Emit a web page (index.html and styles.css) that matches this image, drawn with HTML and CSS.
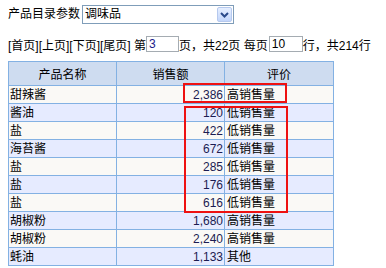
FILE: index.html
```html
<!DOCTYPE html>
<html>
<head>
<meta charset="utf-8">
<link rel="stylesheet" href="styles.css">
</head>
<body>
<div class="row-param">
  <span class="label">产品目录参数</span>
  <div class="select">
    <span class="select-text">调味品</span>
    <span class="select-btn">
      <svg width="9" height="6" viewBox="0 0 9 6"><path d="M1 1 L4.5 4.5 L8 1" fill="none" stroke="#2a4a8a" stroke-width="2"/></svg>
    </span>
  </div>
</div>
<div class="pager">
  <span>[首页][上页][下页][尾页] 第</span>
  <span class="input input-page">3</span>
  <span>页，共22页 每页</span>
  <span class="input input-rows">10</span>
  <span>行，共214行</span>
</div>
<div class="table-wrap">
  <table class="grid">
    <colgroup><col class="c1"><col class="c2"><col class="c3"></colgroup>
    <thead>
      <tr><th>产品名称</th><th>销售额</th><th>评价</th></tr>
    </thead>
    <tbody>
      <tr class="odd"><td>甜辣酱</td><td class="num">2,386</td><td>高销售量</td></tr>
      <tr class="even"><td>酱油</td><td class="num">120</td><td>低销售量</td></tr>
      <tr class="odd"><td>盐</td><td class="num">422</td><td>低销售量</td></tr>
      <tr class="even"><td>海苔酱</td><td class="num">672</td><td>低销售量</td></tr>
      <tr class="odd"><td>盐</td><td class="num">285</td><td>低销售量</td></tr>
      <tr class="even"><td>盐</td><td class="num">176</td><td>低销售量</td></tr>
      <tr class="odd"><td>盐</td><td class="num">616</td><td>低销售量</td></tr>
      <tr class="even"><td>胡椒粉</td><td class="num">1,680</td><td>高销售量</td></tr>
      <tr class="odd"><td>胡椒粉</td><td class="num">2,240</td><td>高销售量</td></tr>
      <tr class="even"><td>蚝油</td><td class="num">1,133</td><td>其他</td></tr>
    </tbody>
  </table>
  <div class="mark mark-high"></div>
  <div class="mark mark-low"></div>
</div>
</body>
</html>
```
FILE: styles.css
```css
html, body {
  margin: 0;
  padding: 0;
  background: #ffffff;
}
body {
  padding: 5px 8px 0 8px;
  font-family: "Liberation Sans", "Noto Sans CJK SC", sans-serif;
  font-size: 12px;
  color: #000;
}
.row-param {
  display: flex;
  align-items: center;
  height: 19px;
}
.label {
  line-height: 19px;
  margin-right: 2px;
}
.select {
  display: flex;
  align-items: stretch;
  width: 152px;
  height: 19px;
  box-sizing: border-box;
  border: 1px solid #7f9db9;
  background: #fff;
}
.select-text {
  flex: 1;
  line-height: 17px;
  padding-left: 2px;
}
.select-btn {
  width: 15px;
  margin: 1px;
  box-sizing: border-box;
  border: 1px solid #b6c9ee;
  border-radius: 2px;
  background: linear-gradient(#e6efff, #c3d6fb);
  display: flex;
  align-items: center;
  justify-content: center;
}
.pager {
  display: flex;
  align-items: center;
  margin-top: 12px;
  height: 16px;
  white-space: nowrap;
}
.input {
  display: inline-block;
  box-sizing: border-box;
  height: 16px;
  line-height: 14px;
  border: 1px solid #a5acb2;
  padding-left: 2px;
  background: #fff;
}
.input-page {
  width: 33px;
  margin-left: 0;
  color: #20208a;
}
.input-rows {
  width: 34px;
  margin-left: 1px;
}
.table-wrap {
  position: relative;
  margin-top: 9px;
  width: 325px;
}
.grid {
  border-collapse: collapse;
  width: 325px;
  table-layout: fixed;
}
.c1 { width: 108px; }
.c2 { width: 108px; }
.c3 { width: 109px; }
.grid th, .grid td {
  border: 1px solid #83b1e3;
  padding: 0 1px;
  white-space: nowrap;
  overflow: hidden;
}
.grid th {
  height: 23px;
  background: #cedcf0;
  font-weight: normal;
  text-align: center;
}
.grid td {
  height: 17px;
  line-height: 16px;
}
.grid td.num {
  text-align: right;
  color: #1c1c52;
}
.grid td:nth-child(3) {
  padding-left: 2px;
}
.odd td { background: #faf9f6; }
.even td { background: #e6ebff; }
.mark {
  position: absolute;
  box-sizing: border-box;
  border: 2px solid #ee1111;
}
.mark-high {
  left: 175px;
  top: 22px;
  width: 104px;
  height: 20px;
}
.mark-low {
  left: 176px;
  top: 45px;
  width: 104px;
  height: 107px;
}
```
